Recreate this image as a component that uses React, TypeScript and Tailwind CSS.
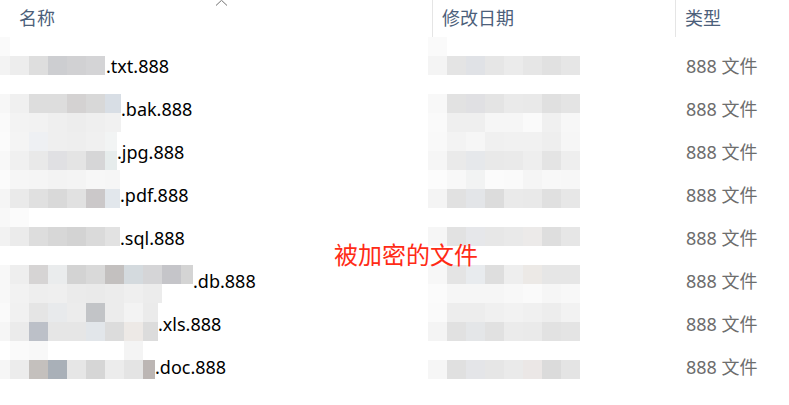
type Row = {
  ext: string;
  w: string;
  mt: string;
  top: string[];
  bottom: string[];
  dateTop: string[];
  dateBottom: string[];
};

const rows: Row[] = [
  {
    ext: ".txt.888",
    w: "w-[106px]",
    mt: "mt-[-7px]",
    top: ["bg-[#fafafa]", "", "", "", "", "", ""],
    bottom: ["bg-[#f3f3f3]", "bg-[#ededed]", "bg-[#dedede]", "bg-[#cdced1]", "bg-[#d1d1d3]", "bg-[#d4d4d6]"],
    dateTop: ["bg-[#fafafa]", "", "", "", "", "", "", ""],
    dateBottom: ["bg-[#f4f4f4]", "bg-[#e4e4e4]", "bg-[#e0e2e6]", "bg-[#e6e6e6]", "bg-[#ebebeb]", "bg-[#e6e6e6]", "bg-[#e1e1e1]", "bg-[#e6e6e6]"],
  },
  {
    ext: ".bak.888",
    w: "w-[121px]",
    mt: "mt-[7px]",
    top: ["bg-[#f7f7f7]", "bg-[#f0f0f0]", "bg-[#dddddd]", "bg-[#dddddd]", "bg-[#d4d2d2]", "bg-[#d8d8d8]", "bg-[#d8dee5]"],
    bottom: ["bg-[#fafafa]", "bg-[#f3f3f3]", "bg-[#f2f2f2]", "bg-[#efefef]", "bg-[#ededed]", "bg-[#efefef]", "bg-[#f1f1f1]"],
    dateTop: ["bg-[#f8f8f8]", "bg-[#e2e2e2]", "bg-[#e0e0e3]", "bg-[#e4e4e4]", "bg-[#eaeaea]", "bg-[#e9e9e9]", "bg-[#e0e0e0]", "bg-[#e4e4e4]"],
    dateBottom: ["bg-[#fafafa]", "bg-[#efefef]", "bg-[#efefef]", "bg-[#f6f6f6]", "bg-[#f6f6f6]", "bg-[#fafafa]", "bg-[#f0f0f0]", "bg-[#f7f7f7]"],
  },
  {
    ext: ".jpg.888",
    w: "w-[117px]",
    mt: "mt-[2px]",
    top: ["bg-[#fbfbfb]", "bg-[#f4f4f4]", "bg-[#eef0f3]", "bg-[#efefef]", "bg-[#eeeeee]", "bg-[#f0f0f0]", "bg-[#f2f4f4]"],
    bottom: ["bg-[#f8f8f8]", "bg-[#f0f0f0]", "bg-[#e9e9e9]", "bg-[#e0e0e3]", "bg-[#e4e4e4]", "bg-[#d6d6d7]", "bg-[#e6ecec]"],
    dateTop: ["bg-[#f9f9f9]", "bg-[#f3f3f3]", "bg-[#f6f6f6]", "bg-[#f0f0f0]", "bg-[#f1f1f1]", "bg-[#f1f1f1]", "bg-[#eeeeee]", "bg-[#f6f6f6]"],
    dateBottom: ["bg-[#f6f6f6]", "bg-[#eaeaea]", "bg-[#e6e8eb]", "bg-[#e9e9e9]", "bg-[#eaeaea]", "bg-[#eeeeee]", "bg-[#e4e4e4]", "bg-[#eeeeee]"],
  },
  {
    ext: ".pdf.888",
    w: "w-[120px]",
    mt: "mt-[-3px]",
    top: ["bg-[#fbfbfb]", "bg-[#f6f6f6]", "bg-[#f5f5f5]", "bg-[#f3f3f3]", "bg-[#f4f4f4]", "bg-[#f7f7f7]", "bg-[#f6f6f6]"],
    bottom: ["bg-[#f5f5f5]", "bg-[#eaeaea]", "bg-[#e0e0e0]", "bg-[#d9d9d9]", "bg-[#e1e1e1]", "bg-[#cbc8c9]", "bg-[#e2e7ec]"],
    dateTop: ["bg-[#fcfcfc]", "bg-[#f8f8f8]", "bg-[#f2f3f3]", "bg-[#fbfbfb]", "bg-[#fafafa]", "bg-[#f5f5f5]", "bg-[#f8f8f8]", "bg-[#f7f7f7]"],
    dateBottom: ["bg-[#f4f4f4]", "bg-[#e1e1e1]", "bg-[#e3e5e8]", "bg-[#dcdcdc]", "bg-[#eaeaea]", "bg-[#e9e9e9]", "bg-[#e0e0e0]", "bg-[#e7e7e7]"],
  },
  {
    ext: ".sql.888",
    w: "w-[120px]",
    mt: "mt-[-8px]",
    top: ["bg-[#f8f8f8]", "bg-[#fbfbfb]", "", "", "", "", ""],
    bottom: ["bg-[#f2f2f2]", "bg-[#ebebeb]", "bg-[#dddddd]", "bg-[#d7d7d7]", "bg-[#d3d3d3]", "bg-[#dadada]", "bg-[#e2e2e2]"],
    dateTop: ["", "", "", "", "", "", "", ""],
    dateBottom: ["bg-[#f6f6f6]", "bg-[#e2e2e2]", "bg-[#e6e7ea]", "bg-[#e7e7e7]", "bg-[#e9e9e9]", "bg-[#eceae9]", "bg-[#dedede]", "bg-[#e6e6e6]"],
  },
  {
    ext: ".db.888",
    w: "w-[193px]",
    mt: "mt-[6px]",
    top: ["bg-[#f8f8f8]", "bg-[#eeeeee]", "bg-[#d6d4d4]", "bg-[#eaeced]", "bg-[#d3d3d3]", "bg-[#d9d9d9]", "bg-[#c3c0bf]", "bg-[#d4dade]", "bg-[#d5d5d7]", "bg-[#c5c5c9]", "bg-[#d4d4d4]"],
    bottom: ["bg-[#f8f8f8]", "bg-[#f2f2f2]", "bg-[#eeeeee]", "bg-[#efefef]", "bg-[#ebebeb]", "bg-[#eaeaea]", "bg-[#ececec]", "bg-[#efefef]", "bg-[#ececec]", "", ""],
    dateTop: ["bg-[#f7f7f7]", "bg-[#e4e4e4]", "bg-[#e8ebee]", "bg-[#dedede]", "bg-[#eeeeee]", "bg-[#ece9e6]", "bg-[#e6e6e6]", "bg-[#e6e6e6]"],
    dateBottom: ["bg-[#fbfbfb]", "bg-[#f6f6f6]", "bg-[#f6f6f6]", "bg-[#f6f6f6]", "bg-[#f8f8f8]", "bg-[#fafafa]", "bg-[#f6f6f6]", "bg-[#f8f8f8]"],
  },
  {
    ext: ".xls.888",
    w: "w-[158px]",
    mt: "mt-[1px]",
    top: ["bg-[#fafafa]", "bg-[#f1f1f1]", "bg-[#e5e5e5]", "bg-[#e8eaec]", "bg-[#ececec]", "bg-[#c2c4c7]", "bg-[#ececec]", "bg-[#f3f3f3]", "bg-[#ebebeb]"],
    bottom: ["bg-[#f6f6f6]", "bg-[#ebebeb]", "bg-[#bcc0c8]", "bg-[#e6e6e6]", "bg-[#e6e6e6]", "bg-[#e2e6ea]", "bg-[#dcdcdc]", "bg-[#ede9e6]", "bg-[#dcdcdc]"],
    dateTop: ["bg-[#fafafa]", "bg-[#ededed]", "bg-[#ededed]", "bg-[#f0f0f0]", "bg-[#f2f2f2]", "bg-[#f0f0f0]", "bg-[#ededed]", "bg-[#f2f2f2]"],
    dateBottom: ["bg-[#f4f4f4]", "bg-[#e1e1e1]", "bg-[#e4e6e8]", "bg-[#e1e1e1]", "bg-[#ebebeb]", "bg-[#eaeaea]", "bg-[#e2e2e2]", "bg-[#e4e4e4]"],
  },
  {
    ext: ".doc.888",
    w: "w-[155px]",
    mt: "mt-[-4px]",
    top: ["", "bg-[#fafafa]", "bg-[#f8f8f8]", "", "", "", "", "bg-[#f4f4f4]", ""],
    bottom: ["bg-[#f6f6f6]", "bg-[#ececec]", "bg-[#c4c0bd]", "bg-[#a9b0b8]", "bg-[#e6e6e6]", "bg-[#d6d6d6]", "bg-[#ececec]", "bg-[#e4e4e4]", "bg-[#bcb6b4]"],
    dateTop: ["", "", "", "", "", "", "", ""],
    dateBottom: ["bg-[#f6f6f6]", "bg-[#e0e0e0]", "bg-[#e4e5e8]", "bg-[#e6e6e6]", "bg-[#eaeaea]", "bg-[#ebe7e6]", "bg-[#dbdbdb]", "bg-[#e4e4e4]"],
  },
];

function Band({ cells, lead }: { cells: string[]; lead?: boolean }) {
  return (
    <div className="flex h-[19px]">
      {cells.map((c, i) => (
        <div
          key={i}
          className={`h-[19px] shrink-0 ${lead && i === 0 ? "w-[10px]" : "w-[19px]"} ${c}`}
        />
      ))}
    </div>
  );
}

function FileRow({ row }: { row: Row }) {
  return (
    <div className="flex h-[43px] items-center">
      <div className="flex h-full w-[428px] shrink-0 items-center">
        <div className={`flex shrink-0 flex-col self-start overflow-hidden ${row.w} ${row.mt}`}>
          <Band cells={row.top} lead />
          <Band cells={row.bottom} lead />
        </div>
        <span className="text-[18px] leading-none text-black">{row.ext}</span>
      </div>
      <div className="flex h-full w-[247px] shrink-0">
        <div className={`flex w-[152px] shrink-0 flex-col self-start overflow-hidden ${row.mt}`}>
          <Band cells={row.dateTop} />
          <Band cells={row.dateBottom} />
        </div>
      </div>
      <div className="pl-[11px] text-[18px] leading-none text-[#6d6d6d]">888 文件</div>
    </div>
  );
}

export default function App() {
  return (
    <div className="relative h-[405px] w-[789px] overflow-hidden bg-white font-['Noto_Sans','Noto_Sans_CJK_SC',sans-serif]">
      <div className="flex h-[44px] text-[18px] text-[#4c607a]">
        <div className="relative flex h-[37px] w-[433px] shrink-0 items-center border-r border-[#e5e5e5] pl-[19px]">
          名称
          <svg
            className="absolute left-[215px] top-0"
            width="13"
            height="7"
            viewBox="0 0 13 7"
            fill="none"
          >
            <polyline points="1,5.5 6.5,0.3 12,5.5" stroke="#707070" strokeWidth="1" />
          </svg>
        </div>
        <div className="flex h-[37px] w-[243px] shrink-0 items-center border-r border-[#e5e5e5] pl-[9px]">
          修改日期
        </div>
        <div className="flex h-[37px] items-center pl-[9px]">类型</div>
      </div>

      <div className="flex flex-col">
        {rows.map((r) => (
          <FileRow key={r.ext} row={r} />
        ))}
      </div>

      <div className="absolute left-[334px] top-[240px] text-[24px] leading-[30px] text-[#ff2b16]">
        被加密的文件
      </div>
    </div>
  );
}
